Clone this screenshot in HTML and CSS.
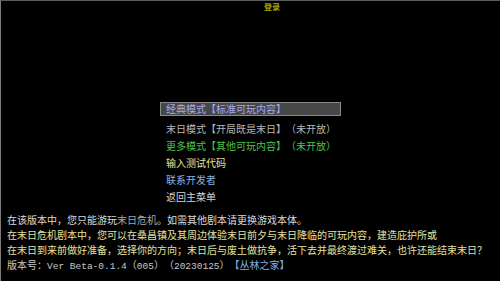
FILE: index.html
```html
<!DOCTYPE html>
<html lang="zh-CN">
<head>
<meta charset="utf-8">
<title>登录</title>
<link rel="stylesheet" href="styles.css">
</head>
<body>
<div class="frame">
  <div class="title">登录</div>
  <div class="menu">
    <div class="item selected">经典模式【标准可玩内容】</div>
    <div class="item gray">末日模式【开局既是末日】（未开放）</div>
    <div class="item green">更多模式【其他可玩内容】（未开放）</div>
    <div class="item yellow">输入测试代码</div>
    <div class="item blue">联系开发者</div>
    <div class="item white">返回主菜单</div>
  </div>
  <div class="info">
    <div class="line l1">在该版本中，您只能游玩<span class="dim">末日危机</span>。如需其他剧本请更换游戏本体。</div>
    <div class="line l2">在末日危机剧本中，您可以在桑昌镇及其周边体验末日前夕与末日降临的可玩内容，建造庇护所或</div>
    <div class="line l2">在末日到来前做好准备，选择你的方向；末日后与废土做抗争，活下去并最终渡过难关，也许还能结束末日？</div>
    <div class="line l4">版本号：<span class="latin">Ver Beta-0.1.4</span>（<span class="latin">005</span>）（<span class="latin">20230125</span>）<span class="link">【丛林之家】</span></div>
  </div>
</div>
</body>
</html>
```
FILE: styles.css
```css
html, body {
  margin: 0;
  padding: 0;
  background: #000;
}
body {
  width: 500px;
  height: 281px;
  overflow: hidden;
  font-family: "Noto Sans CJK SC", "Noto Sans", sans-serif;
  text-spacing-trim: space-all;
}
.frame {
  box-sizing: border-box;
  width: 500px;
  height: 281px;
  border-top: 1px solid #5c5c5c;
  border-left: 1px solid #7a7a7a;
  display: flex;
  flex-direction: column;
}
.title {
  height: 11px;
  margin-left: 263px;
  font-size: 8px;
  line-height: 9px;
  padding-top: 1px;
  box-sizing: border-box;
  color: #a6a600;
  font-weight: bold;
}
.menu {
  margin-top: 90px;
  margin-left: 159px;
  display: flex;
  flex-direction: column;
}
.item {
  font-size: 10px;
  height: 17px;
  line-height: 17px;
  padding-left: 6px;
  white-space: nowrap;
}
.item.selected {
  box-sizing: border-box;
  width: 181px;
  height: 14px;
  line-height: 12px;
  padding-left: 5px;
  margin-bottom: 4px;
  background: #474747;
  border: 1px solid #8a8a8a;
  color: #a8a8ee;
}
.gray { color: #b8b8b8; }
.green { color: #4cc24c; }
.yellow { color: #e6e6a0; }
.blue { color: #8ab2e2; }
.white { color: #d4d4d4; }
.info {
  margin-top: 7px;
  padding-left: 6px;
  display: flex;
  flex-direction: column;
}
.line {
  font-size: 10px;
  height: 15px;
  line-height: 15px;
  white-space: nowrap;
}
.l1 { color: #dadada; }
.l1 .dim { color: #a8a8a8; }
.l2 { color: #e2e2a2; }
.l4 { color: #c8c8c8; }
.latin {
  font-family: "Liberation Mono", monospace;
  font-size: 9.5px;
}
.link { color: #84b2e4; }
```
